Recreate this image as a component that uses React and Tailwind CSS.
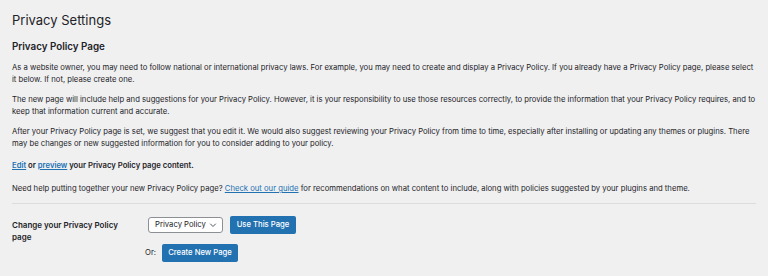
export default function App() {
  return (
    <div className="h-[276px] w-[768px] overflow-hidden bg-[#f0f0f1] px-3 text-[#1d2327] font-['Inter',_'Noto_Sans',_sans-serif]">
      <h1 className="pt-[13px] text-[13px] leading-[14px] font-normal">Privacy Settings</h1>
      <h2 className="mt-[14px] text-[9.8px] leading-[12px] font-semibold">Privacy Policy Page</h2>

      <div className="w-[745px] text-[7.7px] leading-[12px]">
        <p className="mt-[9px]">
          As a website owner, you may need to follow national or international privacy laws. For example, you may need to create and display a Privacy Policy. If you already have a Privacy Policy page, please select it below. If not, please create one.
        </p>
        <p className="mt-2">
          The new page will include help and suggestions for your Privacy Policy. However, it is your responsibility to use those resources correctly, to provide the information that your Privacy Policy requires, and to keep that information current and accurate.
        </p>
        <p className="mt-2">
          After your Privacy Policy page is set, we suggest that you edit it. We would also suggest reviewing your Privacy Policy from time to time, especially after installing or updating any themes or plugins. There may be changes or new suggested information for you to consider adding to your policy.
        </p>
        <p className="mt-[10px] font-semibold">
          <a href="#" className="text-[#2271b1] underline">Edit</a> or{' '}
          <a href="#" className="text-[#2271b1] underline">preview</a> your Privacy Policy page content.
        </p>
        <p className="mt-[11px]">
          Need help putting together your new Privacy Policy page?{' '}
          <a href="#" className="text-[#2271b1] underline">Check out our guide</a> for recommendations on what content to include, along with policies suggested by your plugins and theme.
        </p>
      </div>

      <hr className="mt-2 border-0 border-t border-[#dcdcde]" />

      <div className="mt-[12px] flex text-[7.7px] leading-[12px]">
        <div className="w-[136px] shrink-0 pt-[3px] pr-[14px] text-[8px] font-semibold">Change your Privacy Policy page</div>
        <div className="flex flex-col">
          <div className="flex items-center gap-[7px]">
            <div className="flex h-[16px] w-[75px] items-center justify-between whitespace-nowrap rounded-[3px] border border-[#8c8f94] bg-white pl-[6px] pr-[5px]">
              <span>Privacy Policy</span>
              <svg width="8" height="8" viewBox="0 0 8 8" fill="none" stroke="#50575e" strokeWidth="1" strokeLinecap="round" strokeLinejoin="round">
                <path d="M1.5 3l2.5 2.5L6.5 3" />
              </svg>
            </div>
            <button type="button" className="h-[18px] w-[66px] whitespace-nowrap rounded-[2px] bg-[#2271b1] text-[7.7px] font-medium text-white">
              Use This Page
            </button>
          </div>
          <div className="mt-[10px] -ml-[3px] flex items-center gap-[6px]">
            <span>Or:</span>
            <button type="button" className="h-[18px] w-[76px] whitespace-nowrap rounded-[2px] bg-[#2271b1] text-[7.7px] font-medium text-white">
              Create New Page
            </button>
          </div>
        </div>
      </div>
    </div>
  );
}
